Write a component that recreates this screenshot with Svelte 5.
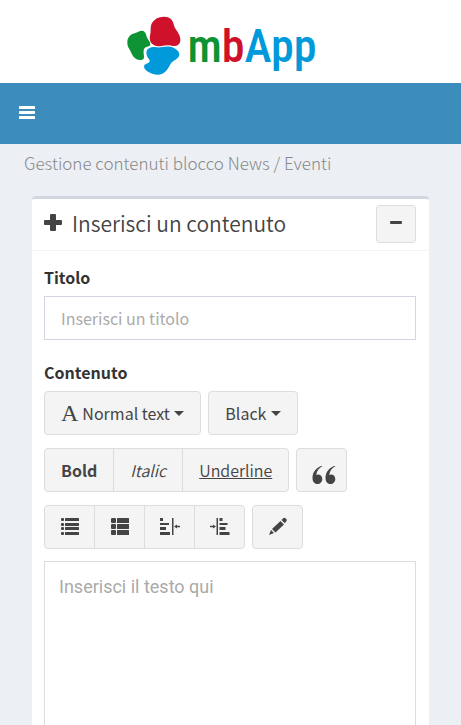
<script>
    let title = '';
    let content = '';
    let textStyle = 'Normal text';
    let textColor = 'Black';
    let open = true;

    const styleOptions = ['Normal text', 'Heading 1', 'Heading 2', 'Heading 3'];
    const colorOptions = ['Black', 'Red', 'Blue', 'Gray'];

    function toggleBox() {
        open = !open;
    }
</script>

<header class="logo">
    <a class="brand" href="#home" aria-label="mbApp">
        <svg class="stones" width="60" height="64" viewBox="0 0 180 192" aria-hidden="true">
            <path fill="#0d9334" d="M10 86C10 72 17 62 32 58C42 55 48 49 57 51C65 53 66 62 70 73C73 80 80 84 79 92C77 98 64 97 60 105C57 113 60 121 60 130C60 138 52 139 43 137C28 133 24 121 19 110C14 101 10 97 10 86Z" />
            <path fill="#d0112b" d="M93 17C103 9 122 6 135 11C150 18 147 33 155 45C163 57 170 66 169 81C167 94 156 98 143 95C132 92 121 94 113 96C101 99 84 95 79 82C75 69 80 62 80 48C80 35 82 25 93 17Z" />
            <path fill="#0099da" d="M75 103C86 96 98 101 110 100C124 98 135 95 148 101C160 107 167 114 166 124C163 136 147 139 140 149C134 161 126 174 115 179C102 185 86 181 75 175C64 169 58 162 61 154C64 149 76 149 77 142C78 135 70 133 68 122C66 114 67 107 75 103Z" />
        </svg>
        <span class="brand-name"><span class="green">m</span><span class="red">b</span><span class="blue">App</span></span>
    </a>
</header>

<nav class="navbar">
    <button class="menu-button" aria-label="Menu">
        <svg width="16" height="14" viewBox="0 0 16 14" fill="currentColor">
            <rect width="16" height="3" y="0" rx=".5" />
            <rect width="16" height="3" y="5" rx=".5" />
            <rect width="16" height="3" y="10" rx=".5" />
        </svg>
    </button>
</nav>

<main>
    <h1>Gestione contenuti blocco News / Eventi</h1>

    <section class="box">
        <div class="box-header">
            <svg width="18" height="18" viewBox="0 0 18 18" fill="currentColor" aria-hidden="true">
                <path d="M7 0H11Q12 0 12 1V6H17Q18 6 18 7V10Q18 11 17 11H12V16Q12 17 11 17H7Q6 17 6 16V11H1Q0 11 0 10V7Q0 6 1 6H6V1Q6 0 7 0Z" />
            </svg>
            <h2>Inserisci un contenuto</h2>
            <button class="btn collapse" aria-label="Riduci" on:click={toggleBox}>
                <svg width="12" height="3" viewBox="0 0 12 3" fill="currentColor"><rect width="12" height="3" rx="1" /></svg>
            </button>
        </div>

        {#if open}
            <div class="box-body">
                <label class="field-label" for="title">Titolo</label>
                <input id="title" type="text" placeholder="Inserisci un titolo" bind:value={title} />

                <label class="field-label" for="content">Contenuto</label>
                <div class="toolbar">
                    <div class="row">
                        <label class="btn dropdown">
                            <span class="font-icon" aria-hidden="true">A</span>
                            <select aria-label="Stile" bind:value={textStyle}>
                                {#each styleOptions as option}
                                    <option>{option}</option>
                                {/each}
                            </select>
                            <svg width="10" height="5" viewBox="0 0 10 5" fill="currentColor"><path d="M0 0H10L5 5Z" /></svg>
                        </label>
                        <label class="btn dropdown">
                            <select aria-label="Colore" bind:value={textColor}>
                                {#each colorOptions as option}
                                    <option>{option}</option>
                                {/each}
                            </select>
                            <svg width="10" height="5" viewBox="0 0 10 5" fill="currentColor"><path d="M0 0H10L5 5Z" /></svg>
                        </label>
                    </div>

                    <div class="row">
                        <div class="btn-group">
                            <button class="btn"><b>Bold</b></button>
                            <button class="btn light"><i>Italic</i></button>
                            <button class="btn light"><u>Underline</u></button>
                        </div>
                        <button class="btn quote" aria-label="Citazione">
                            <svg width="24" height="18" viewBox="0 0 24 18" fill="currentColor">
                                <path d="M10.500 0C7 2 4.500 5 4.300 9C4.800 8.700 5.400 8.500 6 8.500C8.500 8.500 10.300 10.500 10.300 13C10.300 15.900 8.200 18 5.500 18C2.300 18 .5 15.500 .5 12C.5 6 4.500 1.500 10.200 -.5Z" />
                                <path d="M23.500 0C20 2 17.500 5 17.300 9C17.800 8.700 18.400 8.500 19 8.500C21.500 8.500 23.300 10.500 23.300 13C23.300 15.900 21.200 18 18.500 18C15.300 18 13.500 15.500 13.500 12C13.500 6 17.500 1.500 23.200 -.5Z" />
                            </svg>
                        </button>
                    </div>

                    <div class="row">
                        <div class="btn-group icons">
                            <button class="btn" aria-label="Elenco puntato">
                                <svg width="18" height="18" viewBox="0 0 18 18" fill="currentColor">
                                    {#each [0, 5, 9, 14] as y}
                                        <rect x="0" {y} width="3" height="3" rx="1" />
                                        <rect x="4" {y} width="14" height="3" rx=".5" />
                                    {/each}
                                </svg>
                            </button>
                            <button class="btn" aria-label="Elenco numerato">
                                <svg width="18" height="18" viewBox="0 0 18 18" fill="currentColor">
                                    {#each [0, 6, 12] as y}
                                        <rect x="0" {y} width="5" height="5" rx="1" />
                                        <rect x="6" {y} width="12" height="5" rx=".5" />
                                    {/each}
                                </svg>
                            </button>
                            <button class="btn" aria-label="Riduci rientro">
                                <svg width="20" height="18" viewBox="0 0 20 18" fill="currentColor">
                                    <path d="M0 0h3v3H0zM0 5h9v2H0zM0 9h6v3H0zM0 14h10v3H0zM12 0h1.500v17H12zM14 8.500l3-2v1.300h3v1.400h-3V10.500z" />
                                </svg>
                            </button>
                            <button class="btn" aria-label="Aumenta rientro">
                                <svg width="20" height="18" viewBox="0 0 20 18" fill="currentColor">
                                    <path d="M9.500 0h3v3h-3zM9.500 5h8v2h-8zM9.500 9h6v3h-6zM9.500 14h10v3h-10zM6.500 0h1.500v17H6.500zM6 8.500L3 6.500v1.300H0v1.400h3V10.500z" />
                                </svg>
                            </button>
                        </div>
                        <button class="btn pencil" aria-label="Modifica HTML">
                            <svg width="20" height="20" viewBox="0 0 20 20" fill="currentColor">
                                <path d="M1 18L3 13L6 16ZM4 12L12.500 4L16 7.500L7.500 15.500ZM13.500 3L15.500 1Q16.500 .2 17.500 1.200L18.300 2Q19.300 3 18.500 4L16.800 6.300Z" />
                            </svg>
                        </button>
                    </div>
                </div>

                <textarea id="content" placeholder="Inserisci il testo qui" bind:value={content}></textarea>
            </div>
        {/if}
    </section>
</main>

<style>
    :global(body) {
        background: #ecf0f5;
        font-family: 'Noto Sans CJK JP', 'Open Sans', sans-serif;
        font-size: 16px;
        line-height: 24px;
        color: #444;
    }

    .logo {
        background: #fff;
        height: 83px;
        display: flex;
        justify-content: center;
        align-items: center;
        box-sizing: border-box;
        padding: 8px 20px 0 0;
    }

    .brand {
        display: flex;
        align-items: center;
        gap: 3px;
        text-decoration: none;
    }

    .brand-name {
        font-family: 'Liberation Sans Narrow', 'Arial Narrow', 'Roboto Condensed', sans-serif;
        font-size: 46px;
        font-weight: 500;
        line-height: 56px;
    }

    .green {
        color: #0d9334;
    }

    .red {
        color: #d0112b;
    }

    .blue {
        color: #0099da;
    }

    .navbar {
        background: #3c8dbc;
        height: 61px;
        display: flex;
        align-items: center;
    }

    .menu-button {
        background: none;
        border: 0;
        padding: 16px 19px 18px;
        color: #fff;
        cursor: pointer;
        display: flex;
    }

    main {
        padding: 0 32px 32px;
    }

    h1 {
        margin: 0 -8px;
        padding: 7px 0 21px;
        font-size: 17px;
        line-height: 24px;
        font-weight: 300;
        color: #888;
    }

    .box {
        background: #fff;
        border-top: 3px solid #d2d6de;
        border-radius: 4px;
    }

    .box-header {
        display: flex;
        align-items: center;
        gap: 10px;
        padding: 6px 13px 7px 12px;
        border-bottom: 1px solid #f4f4f4;
    }

    .box-header > svg {
        margin-bottom: 2px;
    }

    h2 {
        flex: 1;
        margin: 0;
        padding-bottom: 2px;
        font-size: 21px;
        line-height: 30px;
        font-weight: 350;
    }

    .btn {
        display: inline-flex;
        align-items: center;
        justify-content: center;
        box-sizing: border-box;
        height: 44px;
        padding: 0 16px;
        background: #f4f4f4;
        border: 1px solid #ddd;
        border-radius: 4px;
        color: #444;
        font: inherit;
        cursor: pointer;
    }

    .btn:hover {
        background: #e7e7e7;
    }

    .collapse {
        width: 40px;
        height: 38px;
        padding: 0 0 4px;
    }

    .box-body {
        padding: 14px 13px 12px 12px;
    }

    .field-label {
        display: block;
        margin-bottom: 7px;
        font-weight: 700;
        color: #333;
    }

    input,
    textarea {
        display: block;
        width: 100%;
        box-sizing: border-box;
        background: #fff;
        border: 1px solid #d2d6de;
        border-radius: 0;
        color: #555;
    }

    input {
        height: 44px;
        padding: 0 16px;
        margin-bottom: 20px;
        font: inherit;
    }

    textarea {
        height: 250px;
        padding: 12px 14px;
        border-color: #ddd;
        font-family: Roboto, sans-serif;
        font-size: 18px;
        line-height: 26px;
        resize: none;
    }

    ::placeholder {
        color: #aaa;
        opacity: 1;
    }

    .toolbar {
        display: flex;
        flex-direction: column;
        gap: 13px;
        margin-bottom: 12px;
    }

    .row {
        display: flex;
        gap: 7px;
    }

    .dropdown {
        gap: 4px;
    }

    .font-icon {
        font-family: 'Liberation Serif', serif;
        font-size: 24px;
    }

    select {
        appearance: none;
        background: none;
        border: 0;
        padding: 0;
        margin: 0;
        color: inherit;
        font: inherit;
        cursor: pointer;
    }

    .btn-group {
        display: flex;
    }

    .btn-group .btn:not(:first-child) {
        margin-left: -1px;
        border-top-left-radius: 0;
        border-bottom-left-radius: 0;
    }

    .btn-group .btn:not(:last-child) {
        border-top-right-radius: 0;
        border-bottom-right-radius: 0;
    }

    .light {
        font-weight: 350;
    }

    .icons .btn,
    .quote,
    .pencil {
        width: 51px;
        padding: 0;
    }

    .quote {
        padding: 10px 0 0 4px;
    }
</style>
